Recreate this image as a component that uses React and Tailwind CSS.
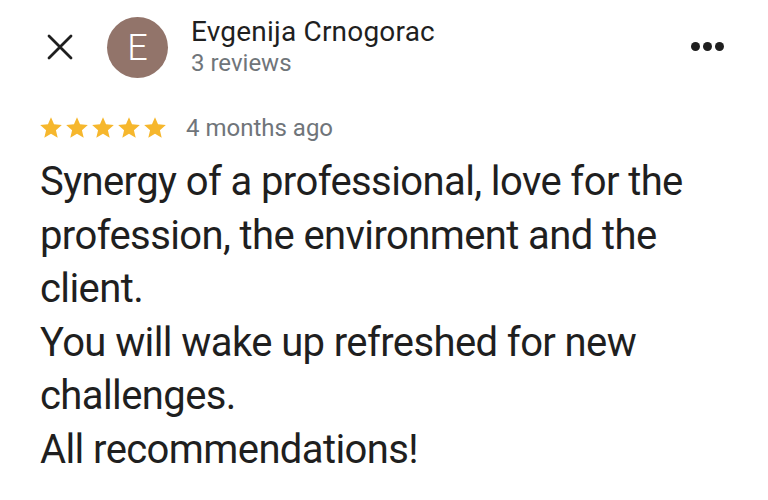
import React from 'react';

const Star = () => (
    <svg width="26" height="26" viewBox="0 0 24 24" className="block">
        <path fill="#f6b72d" d="M12 17.27L18.18 21l-1.64-7.03L22 9.24l-7.19-.61L12 2 9.19 8.63 2 9.24l5.46 4.73L5.82 21z" />
    </svg>
);

const lines = [
    'Synergy of a professional, love for the',
    'profession, the environment and the',
    'client.',
    'You will wake up refreshed for new',
    'challenges.',
    'All recommendations!',
];

const App = () => {
    return (
        <div className="w-[768px] h-[500px] bg-white overflow-hidden text-[#1f1f1f]" style={{ fontFamily: 'Roboto, "Liberation Sans", sans-serif' }}>
            <div className="flex items-start pt-[17px] pr-[44px]">
                <div className="w-[107px] h-[60px] flex items-center justify-center pl-[12px]">
                    <svg width="26" height="26" viewBox="0 0 26 26">
                        <path d="M2 2L24 24M24 2L2 24" stroke="#1f1f1f" strokeWidth="2.8" strokeLinecap="round" />
                    </svg>
                </div>
                <div className="w-[61px] h-[61px] rounded-full bg-[#92746a] flex items-center justify-center text-white text-[36px] font-light leading-none">E</div>
                <div className="ml-[23px] flex-1 -mt-[1px]">
                    <div className="text-[28px] leading-[32px] tracking-[0.2px]">Evgenija Crnogorac</div>
                    <div className="text-[24px] leading-[30px] text-[#70757a]">3 reviews</div>
                </div>
                <div className="flex gap-[3px] mt-[25px]">
                    <span className="w-[9px] h-[9px] rounded-full bg-[#1f1f1f]" />
                    <span className="w-[9px] h-[9px] rounded-full bg-[#1f1f1f]" />
                    <span className="w-[9px] h-[9px] rounded-full bg-[#1f1f1f]" />
                </div>
            </div>
            <div className="flex items-center pl-[38px] mt-[32px]">
                <div className="flex">
                    <Star /><Star /><Star /><Star /><Star />
                </div>
                <span className="ml-[18px] text-[24px] text-[#70757a]">4 months ago</span>
            </div>
            <div className="pl-[40px] mt-[9px] text-[40px] leading-[53.6px] tracking-[-0.6px]">
                {lines.map((l, i) => <div key={i} className="whitespace-nowrap">{l}</div>)}
            </div>
        </div>
    );
};

export default App;
